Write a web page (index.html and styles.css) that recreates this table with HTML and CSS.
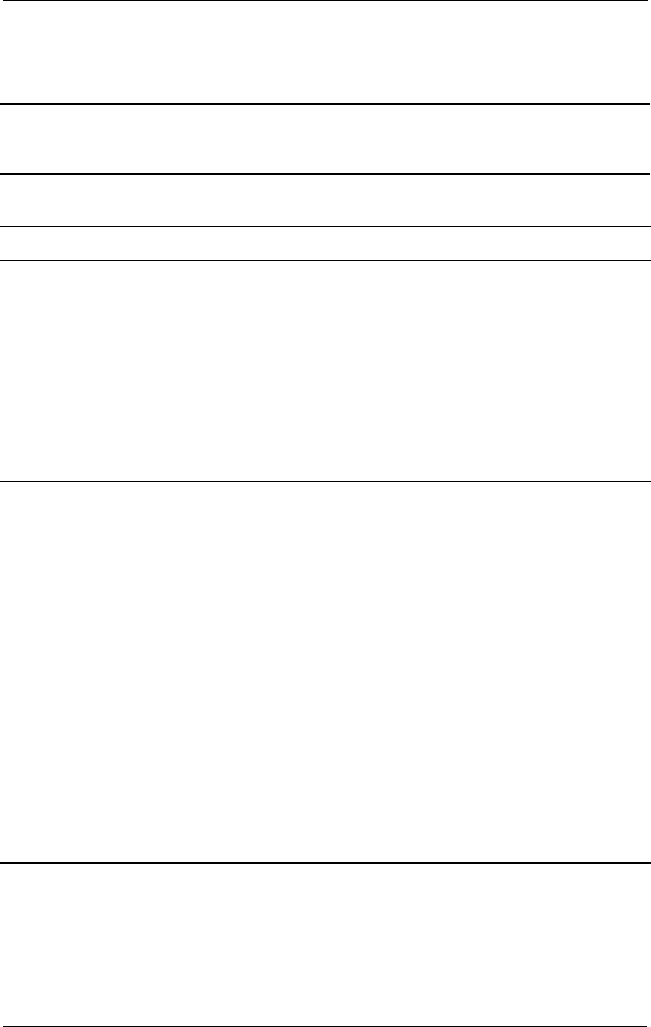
FILE: index.html
```html
<!DOCTYPE html>
<html lang="en">
<head>
    <meta charset="UTF-8">
    <meta name="viewport" content="width=device-width, initial-scale=1.0">
    <title>Page</title>
    <link rel="stylesheet" href="styles.css">
</head>
<body>
    <!-- Ruled page -->
    <main class="page">
        <div class="block block-head"></div>
        <div class="block block-a rule-thick"></div>
        <div class="block block-b rule-thick"></div>
        <div class="block block-c rule-thin"></div>
        <div class="block block-d rule-thin"></div>
        <div class="block block-e rule-thin"></div>
        <div class="block block-f rule-thick"></div>
        <div class="block block-foot"></div>
    </main>
</body>
</html>
```

FILE: styles.css
```css
* {
    margin: 0;
    padding: 0;
    box-sizing: border-box;
}

body {
    background: #ffffff;
    font-family: 'Liberation Serif', serif;
}

.page {
    display: flex;
    flex-direction: column;
    width: 651px;
}

/* Rules sit on top of each block */
.block-head {
    height: 103px;
    margin: 0 3px;
    border-top: 1px solid #000;
}

.rule-thick {
    border-top: 2px solid #000;
}

.rule-thin {
    border-top: 1px solid #000;
}

.block-a {
    height: 70px;
    margin-right: 1px;
}

.block-b {
    height: 53px;
    margin-right: 1px;
}

.block-c {
    height: 34px;
}

.block-d {
    height: 221px;
}

.block-e {
    height: 381px;
}

.block-f {
    height: 164px;
}

.block-foot {
    height: 1px;
    margin: 0 4px 0 3px;
    border-top: 1px solid #000;
}
```
